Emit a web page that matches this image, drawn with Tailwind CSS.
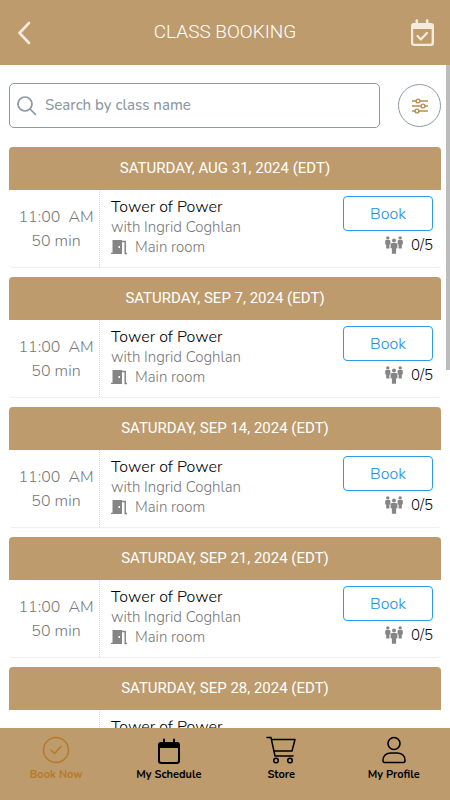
<!DOCTYPE html>
<html lang="en">
<head>
<meta charset="utf-8">
<meta name="viewport" content="width=device-width, initial-scale=1">
<title>Class Booking</title>
<script src="https://cdn.jsdelivr.net/npm/@tailwindcss/browser@4"></script>
</head>
<body class="flex h-screen flex-col overflow-hidden bg-white font-['Nunito','Open_Sans',sans-serif] font-light text-black">
<svg class="hidden" aria-hidden="true">
  <symbol id="door" viewBox="0 0 16 16"><path d="M1.500 1H11v14H0v-1.300h1.500zM7.500 7v2H9V7z" fill="currentColor" fill-rule="evenodd"/><path d="M11 2.500h3.200V14.500H16" fill="none" stroke="currentColor" stroke-width="1.500"/></symbol>
  <symbol id="people" viewBox="0 0 18 18"><g fill="currentColor"><circle cx="2.800" cy="1.900" r="1.700"/><path d="M1 4h3.600l.8.800v3.500l-1 .5v3.800H1.200V8.800l-1-.5V4.800z"/><circle cx="15.200" cy="1.900" r="1.700"/><path d="M13.400 4H17l.8.800v3.500l-1 .5v3.800h-3.200V8.800l-1-.5V4.800z"/><circle cx="9" cy="4.500" r="2"/><path d="M6.800 7h4.400l1.200 1v4l-1.300.6v5.200H6.900v-5.200L5.600 12V8z"/></g></symbol>
</svg>

<header class="flex h-[65px] shrink-0 items-center bg-[#bd9b6c] pr-[14px] pl-4">
  <button type="button" aria-label="Back" class="w-[26px] text-[#f4ebdf]">
    <svg class="h-7 w-4" viewBox="0 0 16 28" fill="none" stroke="currentColor" stroke-width="2.600" stroke-linecap="round" stroke-linejoin="round"><path d="M13 4L3.500 14L13 24"/></svg>
  </button>
  <h1 class="flex-1 text-center font-['Roboto',sans-serif] text-[19px] font-light text-white">CLASS BOOKING</h1>
  <button type="button" aria-label="My bookings" class="w-7 text-[#f4ebdf]">
    <svg class="size-7" viewBox="0 0 28 28"><path d="M5 4h2.500V1.500a1.300 1.300 0 012.600 0V4h7.800V1.500a1.300 1.300 0 012.600 0V4H23a3 3 0 013 3v17a3 3 0 01-3 3H6a3 3 0 01-3-3V7a3 3 0 012-3zM5.200 10v13.500q0 1.200 1.200 1.200h16q1.200 0 1.200-1.200V10z" fill="currentColor" fill-rule="evenodd"/><path d="M9.500 17l3.300 3.500 6.200-6.500" fill="none" stroke="currentColor" stroke-width="2.200" stroke-linecap="round" stroke-linejoin="round"/></svg>
  </button>
</header>

<div class="relative min-h-0 flex-1">
  <main class="h-full overflow-y-auto px-[9px] [scrollbar-width:none]">
    <form class="flex items-center gap-[18px] pt-[18px]">
      <label class="flex h-[45px] min-w-0 flex-1 items-center gap-2 rounded-[5px] border border-[#8b99a3] px-[7px] text-[#8b99a3]">
        <svg class="size-5 shrink-0" viewBox="0 0 20 20" fill="none" stroke="currentColor" stroke-width="1.700" stroke-linecap="round" aria-hidden="true"><circle cx="8" cy="8" r="7"/><path d="M13 13l5.500 5.500"/></svg>
        <input type="search" aria-label="Search by class name" placeholder="Search by class name" class="min-w-0 flex-1 bg-transparent text-[15px] font-medium outline-none placeholder:text-[#8b99a3]">
      </label>
      <button type="button" aria-label="Filters" class="flex size-[43px] items-center justify-center rounded-full border border-[#8b99a3] text-[#b98d4e]">
        <svg class="size-4" viewBox="0 0 16 16" stroke="currentColor" stroke-width="1.400"><path d="M0 3h16M0 8h16M0 13h16"/><g fill="white"><circle cx="6" cy="3" r="1.900"/><circle cx="11" cy="8" r="1.900"/><circle cx="5" cy="13" r="1.900"/></g></svg>
      </button>
    </form>
    <div id="classes" class="flex flex-col gap-[9px] pt-[19px] pb-4"></div>
  </main>
  <div class="absolute top-0 right-0 h-[305px] w-1 bg-[#bcbcbc]"></div>
</div>

<nav class="grid h-[72px] shrink-0 grid-cols-4 bg-[#bd9b6c] pt-2 text-[11px] leading-4 font-bold">
  <a href="#book" aria-current="page" class="flex flex-col items-center gap-[3px] text-[#b87a2a]">
    <svg class="size-7" viewBox="0 0 28 28" fill="none" stroke="currentColor" stroke-width="1.500" stroke-linecap="round" stroke-linejoin="round"><circle cx="14" cy="14" r="12.500"/><path d="M9 14l3.500 3.500 6.500-7"/></svg>Book Now</a>
  <a href="#schedule" class="flex flex-col items-center gap-[3px]">
    <svg class="size-7" viewBox="0 0 28 28"><path d="M6 6h2V3.500a1 1 0 012 0V6h8V3.500a1 1 0 012 0V6h2a3 3 0 013 3v16a3 3 0 01-3 3H6a3 3 0 01-3-3V9a3 3 0 013-3zM5 12v12.500q0 1.500 1.500 1.500h15q1.500 0 1.500-1.500V12z" fill="currentColor" fill-rule="evenodd"/></svg>My Schedule</a>
  <a href="#store" class="flex flex-col items-center gap-[3px]">
    <svg class="h-7 w-8" viewBox="0 0 32 28" fill="none" stroke="currentColor" stroke-width="1.500" stroke-linecap="round" stroke-linejoin="round"><path d="M2 1.500h4l4 18.500h18M6.500 3.500H30l-3 11.500H9"/><circle cx="11" cy="24.500" r="2.300"/><circle cx="25" cy="24.500" r="2.300"/></svg>Store</a>
  <a href="#profile" class="flex flex-col items-center gap-[3px]">
    <svg class="size-7" viewBox="0 0 28 28" fill="none" stroke="currentColor" stroke-width="1.600" stroke-linejoin="round"><circle cx="14" cy="7.500" r="6"/><path d="M3 24.500c0-5 3.500-7.500 8-7.500h6c4.500 0 8 2.500 8 7.500q0 2-1.500 2h-19q-1.500 0-1.500-2z"/></svg>My Profile</a>
</nav>

<script>
const classes = [['AUG 31', true], ['SEP 7', true], ['SEP 14', true], ['SEP 21', true], ['SEP 28', false]];
document.getElementById('classes').innerHTML = classes.map(([date, bookable]) => `
<section class="overflow-hidden rounded-[4px] border-b border-[#edf0f0]">
  <h2 class="bg-[#bd9b6c] text-center font-['Roboto',sans-serif] text-[15px] leading-[43px] font-normal text-white">SATURDAY, ${date}, 2024 (EDT)</h2>
  <div class="flex">
    <div class="w-[91px] shrink-0 border-r border-dotted border-[#d8d8d8] pt-[15px] pl-1 text-center text-[16px] leading-6 whitespace-pre text-[#777]"><p>11:00  AM</p><p>50 min</p></div>
    <div class="min-w-0 flex-1 pt-[7px] pb-[10px] pl-[11px] text-[15px] leading-5 text-[#777]">
      <h3 class="text-[16px] leading-5 text-black">Tower of Power</h3>
      <p>with Ingrid Coghlan</p>
      <p class="flex items-center gap-2"><svg class="size-4 text-[#858585]" aria-hidden="true"><use href="#door"/></svg>Main room</p>
    </div>
    ${bookable ? `<div class="mr-2 flex w-[90px] shrink-0 flex-col items-end pt-[6px]">
      <button type="button" class="h-[35px] w-full rounded-[4px] border border-[#2f9ae8] text-[16px] text-[#168fe6]">Book</button>
      <p class="flex items-center gap-2 pt-1 text-[15px] leading-5"><svg class="size-[18px] text-[#858585]" aria-hidden="true"><use href="#people"/></svg>0/5</p>
    </div>` : ''}
  </div>
</section>`).join('');
</script>
</body>
</html>
